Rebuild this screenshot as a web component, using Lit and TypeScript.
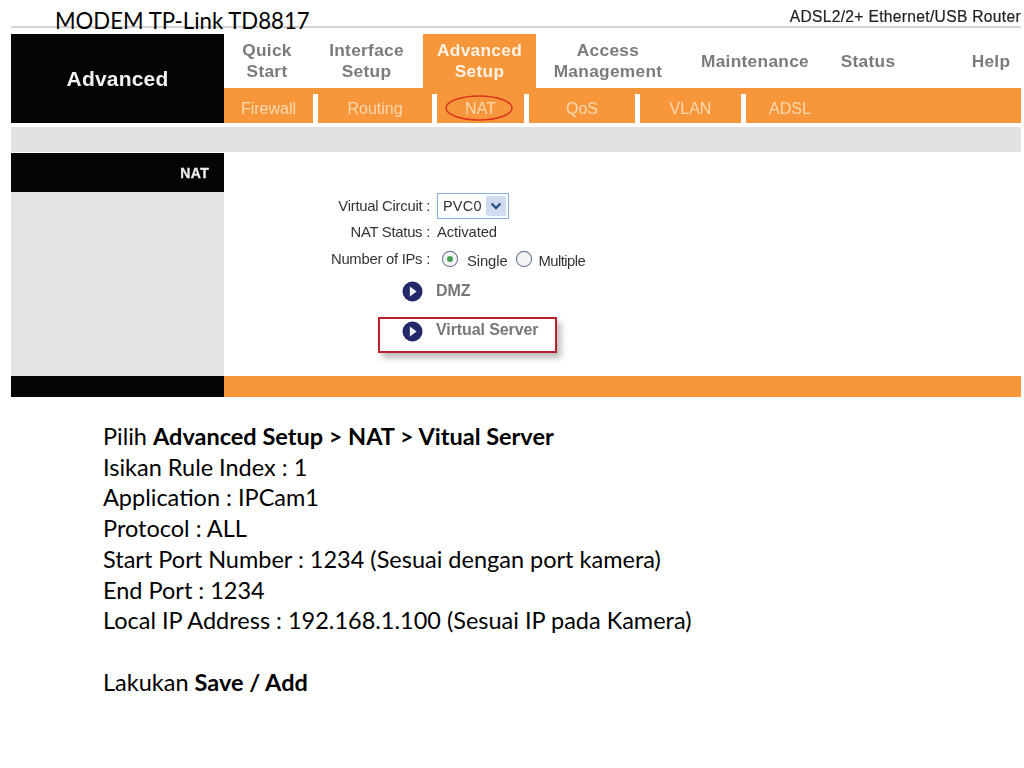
import { LitElement, html, css, svg } from "lit";
import { customElement } from "lit/decorators.js";

const playIcon = html`<svg class="play" viewBox="0 0 22 22" aria-hidden="true"><circle cx="11" cy="11" r="10.5" fill="#23296b"/><path d="M8.2 5.8 L15.4 11 L8.2 16.2 Z" fill="#f4f4f8"/></svg>`;

const radio = (on: boolean) => html`<svg class="radio" viewBox="0 0 18 18" aria-hidden="true"><circle cx="9" cy="9" r="7.6" fill="#f4f5f7" stroke="#77849a" stroke-width="1.2"/>${on ? svg`<circle cx="9" cy="9" r="3" fill="#4a9f58"/>` : ""}</svg>`;

@customElement("app-root")
export class AppRoot extends LitElement {
  static styles = css`
    :host { display: block; width: 1024px; height: 768px; background: #fff; position: relative; overflow: hidden; font-family: "Liberation Sans", Arial, sans-serif; }
    .title { position: absolute; left: 55px; top: 6px; font: 400 22.2px/30px Lato, sans-serif; color: #000; white-space: nowrap; z-index: 2; }
    .shot { margin: 0 3px 0 11px; filter: blur(0.45px); }
    .brand { height: 26px; box-sizing: border-box; display: flex; justify-content: flex-end; align-items: flex-end; font-size: 15.6px; line-height: 18px; letter-spacing: 0.32px; color: #222; -webkit-text-stroke: 0.2px #222; }
    .rule { height: 2px; background: #d4d4d4; margin-bottom: 6px; }
    .head { display: grid; grid-template-columns: 213px 1fr; height: 89px; }
    .logo { background: #050505; color: #f2f2f2; font-weight: 700; font-size: 21px; letter-spacing: 0.2px; display: flex; align-items: center; justify-content: center; padding-top: 1px; }
    .nav { display: flex; flex-direction: column; }
    .tabs { display: grid; grid-template-columns: 86px 113px 113px 144px 150px 76px 55px 60px; height: 54px; }
    .tab { display: flex; align-items: center; justify-content: center; text-align: center; font-weight: 700; font-size: 17.3px; line-height: 21px; letter-spacing: 0.3px; color: #7b7b7b; }
    .tab.on { background: #f7963a; color: #fdf3e6; }
    .subs { display: flex; height: 35px; background: #f7963a; }
    .sub { display: flex; align-items: center; justify-content: center; color: #fbd9b2; font-size: 16px; padding-top: 6px; box-sizing: border-box; }
    .sep { width: 5px; margin-top: 6px; background: #fff; }
    .w1 { width: 89px; } .w2 { width: 114px; } .w3 { width: 87px; position: relative; } .w4 { width: 106px; } .w5 { width: 101px; } .w6 { width: 88px; }
    .oval { position: absolute; left: 8px; top: 7px; width: 68px; height: 26px; }
    .band { height: 25px; margin-top: 4px; background: #e1e2e4; margin-bottom: 1px; }
    .body { display: grid; grid-template-columns: 213px 1fr; height: 223px; }
    .side { background: #e3e3e5; }
    .side-h { height: 39px; background: #050505; color: #eee; font-size: 14px; font-weight: 700; letter-spacing: 0.3px; display: flex; align-items: center; justify-content: flex-end; padding-right: 15px; box-sizing: border-box; -webkit-text-stroke: 0.3px #eee; }
    .main { padding-top: 39px; color: #333; font-size: 14.8px; }
    .row { display: grid; grid-template-columns: 206px 1fr; column-gap: 7px; align-items: center; }
    .row.a { height: 27px; } .row.b { height: 25px; } .row.c { height: 29px; }
    .lab { text-align: right; letter-spacing: -0.25px; white-space: nowrap; }
    .val { display: flex; align-items: center; letter-spacing: -0.1px; }
    .select { width: 72px; height: 26px; box-sizing: border-box; border: 1.5px solid #88aed8; display: flex; align-items: center; justify-content: space-between; padding: 0 2px 0 5px; font-size: 14.5px; letter-spacing: 0.2px; }
    .arrow { width: 20px; height: 20px; background: #cfdcf0; display: flex; align-items: center; justify-content: center; border-radius: 2px; }
    .arrow svg { width: 12px; height: 8px; }
    .radio { width: 18px; height: 18px; flex: none; }
    .radio1 { margin-left: 4px; }
    .opt1 { margin-left: 8px; margin-right: 7px; padding-top: 4px; }
    .opt2 { margin-left: 6px; padding-top: 4px; letter-spacing: -0.55px; }
    .link { display: flex; align-items: center; gap: 13px; color: #777; font-weight: 700; font-size: 16px; letter-spacing: -0.1px; }
    .play { width: 21px; height: 21px; flex: none; }
    .l1 { margin: 4px 0 0 178px; height: 28px; }
    .boxed { margin: 12px 0 0 154px; width: 179px; height: 36px; box-sizing: border-box; border: 2px solid #bb1f2b; box-shadow: 4px 5px 6px rgba(90, 90, 90, 0.4); padding: 0 0 7px 22px; background: #fff; }
    .boxed span { margin-bottom: 3px; }
    .foot { display: grid; grid-template-columns: 213px 1fr; height: 21px; }
    .foot .k { background: #050505; } .foot .o { background: #f7963a; }
    .text { margin: 24px 0 0 103px; font: 400 23.5px/30.7px Lato, sans-serif; color: #000; }
    .text div { min-height: 30.7px; white-space: nowrap; }
    b { font-weight: 700; }
  `;

  render() {
    return html`
      <div class="title">MODEM TP-Link TD8817</div>
      <div class="shot">
        <div class="brand">ADSL2/2+ Ethernet/USB Router</div>
        <div class="rule"></div>
        <div class="head">
          <div class="logo">Advanced</div>
          <div class="nav">
            <div class="tabs">
              <div class="tab">Quick<br />Start</div>
              <div class="tab">Interface<br />Setup</div>
              <div class="tab on">Advanced<br />Setup</div>
              <div class="tab">Access<br />Management</div>
              <div class="tab">Maintenance</div>
              <div class="tab">Status</div>
              <div></div>
              <div class="tab">Help</div>
            </div>
            <div class="subs">
              <div class="sub w1">Firewall</div><div class="sep"></div>
              <div class="sub w2">Routing</div><div class="sep"></div>
              <div class="sub w3">NAT
                <svg class="oval" viewBox="0 0 68 26" aria-hidden="true"><ellipse cx="34" cy="13" rx="33" ry="12" fill="none" stroke="#d8351f" stroke-width="1.4"/></svg>
              </div><div class="sep"></div>
              <div class="sub w4">QoS</div><div class="sep"></div>
              <div class="sub w5">VLAN</div><div class="sep"></div>
              <div class="sub w6">ADSL</div>
            </div>
          </div>
        </div>
        <div class="band"></div>
        <div class="body">
          <div class="side"><div class="side-h">NAT</div></div>
          <div class="main">
            <div class="row a">
              <div class="lab">Virtual Circuit :</div>
              <div class="val"><div class="select">PVC0<span class="arrow"><svg viewBox="0 0 12 8" aria-hidden="true"><path d="M1.5 1.5 L6 6 L10.5 1.5" fill="none" stroke="#2a4f8f" stroke-width="2.4"/></svg></span></div></div>
            </div>
            <div class="row b">
              <div class="lab">NAT Status :</div>
              <div class="val">Activated</div>
            </div>
            <div class="row c">
              <div class="lab">Number of IPs :</div>
              <div class="val"><span class="radio1"></span>${radio(true)}<span class="opt1">Single</span>${radio(false)}<span class="opt2">Multiple</span></div>
            </div>
            <div class="link l1">${playIcon}<span>DMZ</span></div>
            <div class="link boxed">${playIcon}<span>Virtual Server</span></div>
          </div>
        </div>
        <div class="foot"><div class="k"></div><div class="o"></div></div>
      </div>
      <div class="text">
        <div>Pilih <b>Advanced Setup &gt; NAT &gt; Vitual Server</b></div>
        <div>Isikan Rule Index : 1</div>
        <div>Application : IPCam1</div>
        <div>Protocol : ALL</div>
        <div>Start Port Number : 1234 (Sesuai dengan port kamera)</div>
        <div>End Port : 1234</div>
        <div>Local IP Address : 192.168.1.100 (Sesuai IP pada Kamera)</div>
        <div></div>
        <div>Lakukan <b>Save / Add</b></div>
      </div>
    `;
  }
}
